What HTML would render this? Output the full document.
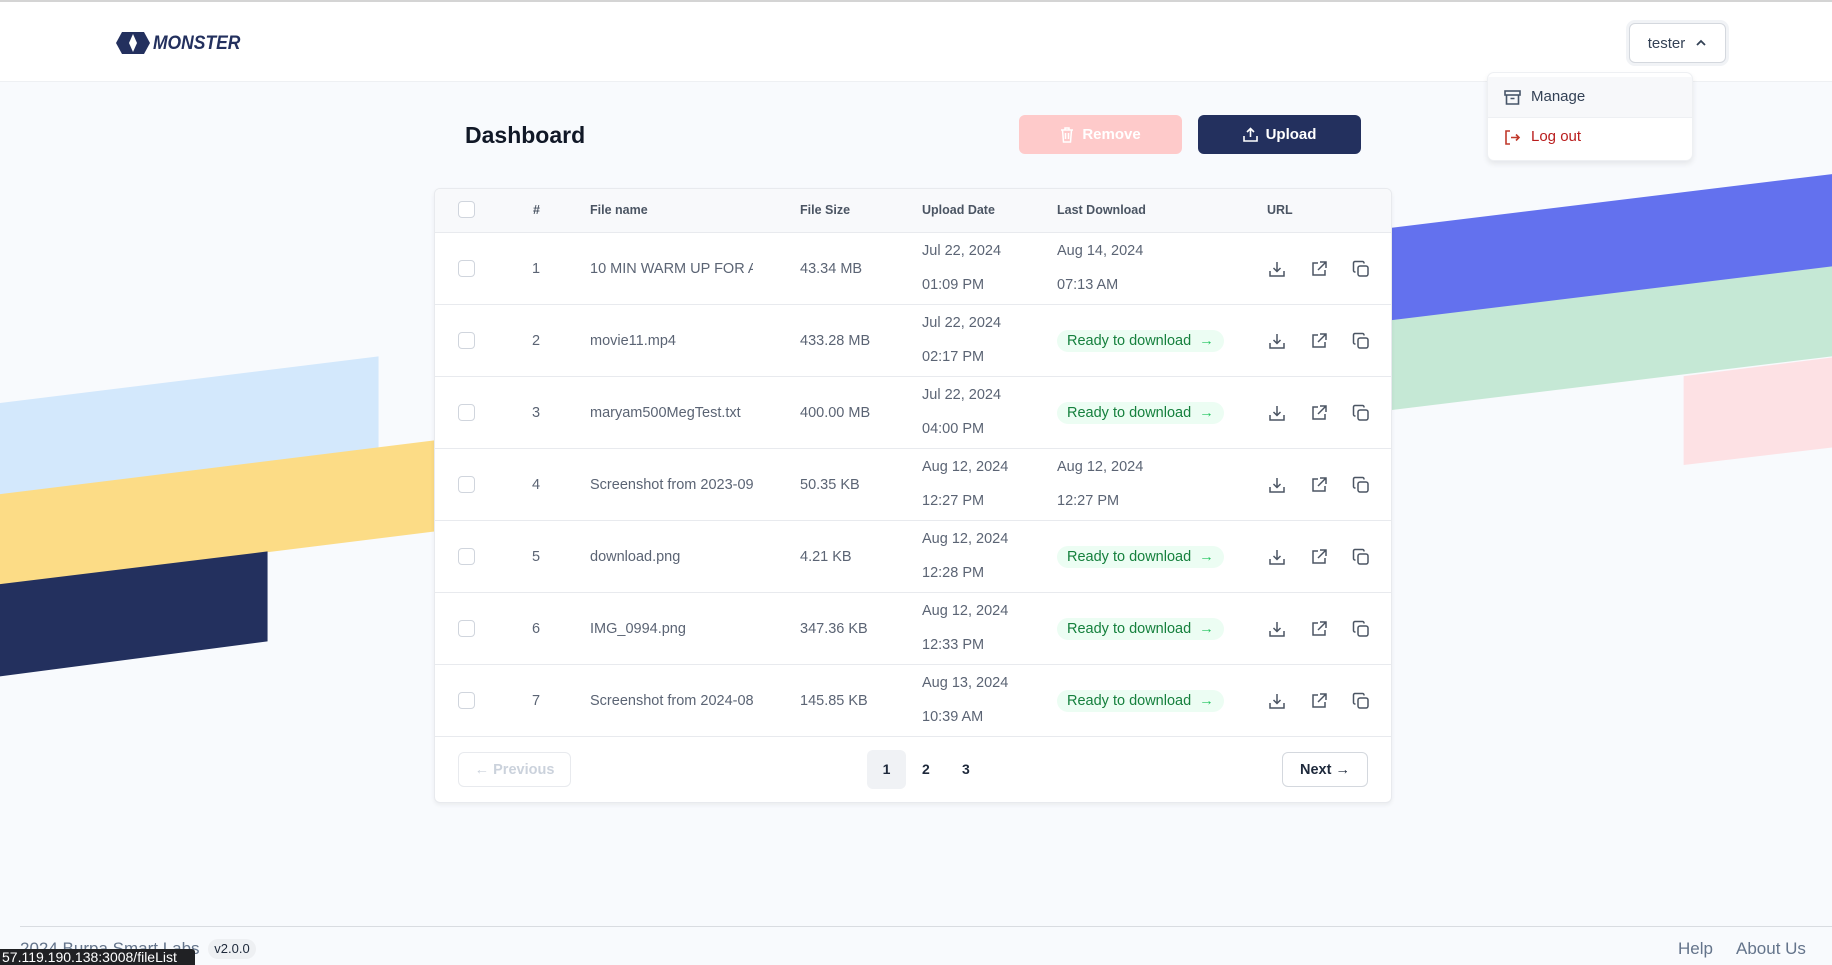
<!DOCTYPE html>
<html><head><meta charset="utf-8"><style>
*{box-sizing:border-box;margin:0;padding:0}
body{width:1832px;height:965px;overflow:hidden;background:#f8fafd;font-family:"Liberation Sans",sans-serif;position:relative;color:#64748b}
.abs{position:absolute}
#hdr{left:0;top:0;width:1832px;height:82px;background:#fff;border-top:2px solid #d4d4d4;border-bottom:1px solid #eef0f3}
.btn{position:absolute;border-radius:6px;display:flex;align-items:center;justify-content:center;gap:8px;font-weight:bold;font-size:15px}
#card{left:434px;top:188px;width:958px;height:615px;background:#fff;border:1px solid #e8eaee;border-radius:6px;box-shadow:0 2px 4px rgba(0,0,0,.06);overflow:hidden}
.th{position:absolute;top:0;height:43px;line-height:43px;font-size:12.5px;font-weight:bold;color:#4b5563}
.row{position:absolute;left:0;width:958px;height:72px;border-top:1px solid #e8eaee}
.c{position:absolute;top:0;height:72px;line-height:72px;font-size:14.5px;color:#5b6474;white-space:nowrap;overflow:hidden}
.d{position:absolute;font-size:14.5px;color:#5b6474;white-space:nowrap}
.cb{position:absolute;left:23px;width:17px;height:17px;border:1px solid #d0d5dd;border-radius:4px;background:#fff}
.rdy{position:absolute;left:622px;top:25px;height:22px;padding:0 10px;border-radius:11px;background:#ecfdf3;color:#15803d;font-size:14.5px;line-height:22px;white-space:nowrap}
.ic{position:absolute;top:27px;width:18px;height:18px}
</style></head><body>
<svg class="abs" style="left:0;top:0" width="1832" height="965" viewBox="0 0 1568 826" preserveAspectRatio="none">
<polygon points="0,345 324,305 324,420 0,460" fill="#d3e8fc"/>
<polygon points="0,423 420,371 420,449 0,501" fill="#fcdc86"/>
<polygon points="0,500 229,472 229,549 0,579" fill="#23305e"/>
<polygon points="1441,322 1568,306 1568,383 1441,398" fill="#fde1e4"/>
<polygon points="1150,278 1568,227 1568,305 1150,356" fill="#c5e8d5"/>
<polygon points="1150,200 1568,149 1568,228 1150,279" fill="#6371ee"/>
</svg>
<div id="hdr" class="abs"></div>
<svg class="abs" style="left:116px;top:32px" width="34" height="22" viewBox="0 0 34 22"><polygon points="6,0 28,0 34,11 28,22 6,22 0,11" fill="#23305e"/><polygon points="17,2 21,11 17,20 13,11" fill="#fff"/></svg>
<div class="abs" style="left:153px;top:33px;font-size:19px;font-weight:bold;font-style:italic;color:#23305e;transform:scaleX(0.92);transform-origin:left">MONSTER</div>
<div class="abs" style="left:1629px;top:23px;width:97px;height:40px;border:1px solid #d4d8de;border-radius:6px;background:#fff;box-shadow:0 0 0 3px #f1f3f6;font-size:15px;color:#334155;display:flex;align-items:center;justify-content:center;gap:10px">tester <svg width="12" height="8" viewBox="0 0 12 8"><path d="M2 6 L6 2 L10 6" stroke="#334155" stroke-width="1.8" fill="none"/></svg></div>
<div class="abs" style="left:1487px;top:72px;width:206px;height:89px;background:#fff;border:1px solid #eef0f3;border-radius:7px;box-shadow:0 3px 6px rgba(0,0,0,.08);overflow:hidden">
<div style="position:absolute;left:0;top:4px;width:206px;height:41px;background:#f7f8fa;border-bottom:1px solid #eef0f3"></div>
<svg class="abs" style="left:16px;top:17px" width="17" height="15" viewBox="0 0 17 15"><rect x="1" y="1" width="15" height="4" fill="none" stroke="#475569" stroke-width="1.6"/><path d="M2.5 5 V14 H14.5 V5 M6.5 8.5 H10.5" fill="none" stroke="#475569" stroke-width="1.6"/></svg>
<div class="abs" style="left:43px;top:15px;font-size:15px;color:#334155">Manage</div>
<svg class="abs" style="left:16px;top:57px" width="17" height="15" viewBox="0 0 17 15"><path d="M6 1 H2 V14 H6 M7 7.5 H15 M12 4.5 L15 7.5 L12 10.5" fill="none" stroke="#c0392b" stroke-width="1.6"/></svg>
<div class="abs" style="left:43px;top:55px;font-size:15px;color:#b91c1c">Log out</div>
</div>
<div class="abs" style="left:465px;top:122px;font-size:23px;font-weight:bold;color:#111827">Dashboard</div>
<div class="btn" style="left:1019px;top:115px;width:163px;height:39px;background:#fecaca;color:#fff"><svg width="14" height="16" viewBox="0 0 14 16"><path d="M1 3 H13 M5 3 V1 H9 V3 M2.5 3 L3.5 15 H10.5 L11.5 3 M5.5 6 V12 M8.5 6 V12" stroke="#fff" stroke-width="1.5" fill="none"/></svg>Remove</div>
<div class="btn" style="left:1198px;top:115px;width:163px;height:39px;background:#23305e;color:#fff"><svg width="15" height="15" viewBox="0 0 15 15"><path d="M1 9 V14 H14 V9 M7.5 10 V1.5 M4 5 L7.5 1.5 L11 5" stroke="#fff" stroke-width="1.6" fill="none"/></svg>Upload</div>

<div id="card" class="abs">
<div style="position:absolute;left:0;top:0;width:958px;height:43px;background:#f8f9fb"></div>
<div style="position:absolute;left:0;top:547px;width:958px;height:1px;background:#e8eaee"></div>
<div class="cb" style="top:12px"></div>
<div class="th" style="left:98px">#</div>
<div class="th" style="left:155px">File name</div>
<div class="th" style="left:365px">File Size</div>
<div class="th" style="left:487px">Upload Date</div>
<div class="th" style="left:622px">Last Download</div>
<div class="th" style="left:832px">URL</div>
</div>
<script>
var data=[
["1","10 MIN WARM UP FOR ATHLETES","43.34 MB","Jul 22, 2024","01:09 PM","Aug 14, 2024","07:13 AM"],
["2","movie11.mp4","433.28 MB","Jul 22, 2024","02:17 PM"],
["3","maryam500MegTest.txt","400.00 MB","Jul 22, 2024","04:00 PM"],
["4","Screenshot from 2023-09-01","50.35 KB","Aug 12, 2024","12:27 PM","Aug 12, 2024","12:27 PM"],
["5","download.png","4.21 KB","Aug 12, 2024","12:28 PM"],
["6","IMG_0994.png","347.36 KB","Aug 12, 2024","12:33 PM"],
["7","Screenshot from 2024-08-13","145.85 KB","Aug 13, 2024","10:39 AM"]];
var ico='<svg class="ic" style="left:LEFTpx" viewBox="0 0 18 18">PATH</svg>';
var p1='<path d="M2 11 V16 H16 V11 M9 2 V11.5 M5.5 8 L9 11.5 L12.5 8" stroke="#4b5563" stroke-width="1.5" fill="none"/>';
var p2='<path d="M8 3 H3 V15 H15 V10 M10 2 H16 V8 M16 2 L8 10" stroke="#4b5563" stroke-width="1.5" fill="none"/>';
var p3='<rect x="6" y="6" width="10" height="10" rx="2" stroke="#4b5563" stroke-width="1.5" fill="none"/><path d="M12 3.5 V3 A1.5 1.5 0 0 0 10.5 1.5 H3 A1.5 1.5 0 0 0 1.5 3 V10.5 A1.5 1.5 0 0 0 3 12 H3.5" stroke="#4b5563" stroke-width="1.5" fill="none"/>';
var h='';
data.forEach(function(r,i){
 var s='<div class="row" style="top:'+(43+i*72)+'px">';
 s+='<div class="cb" style="top:27px"></div>';
 s+='<div class="c" style="left:97px">'+r[0]+'</div>';
 s+='<div class="c" style="left:155px;width:163px">'+r[1]+'</div>';
 s+='<div class="c" style="left:365px">'+r[2]+'</div>';
 s+='<div class="d" style="left:487px;top:10px">'+r[3]+'</div><div class="d" style="left:487px;top:44px">'+r[4]+'</div>';
 if(r[5]) s+='<div class="d" style="left:622px;top:10px">'+r[5]+'</div><div class="d" style="left:622px;top:44px">'+r[6]+'</div>';
 else s+='<div class="rdy">Ready to download &nbsp;<span style="color:#22c55e">→</span></div>';
 s+=ico.replace('LEFT',833).replace('PATH',p1)+ico.replace('LEFT',875).replace('PATH',p2)+ico.replace('LEFT',917).replace('PATH',p3);
 s+='</div>';h+=s;});
document.getElementById('card').insertAdjacentHTML('beforeend',h);
</script>
<div class="abs" style="left:458px;top:752px;width:113px;height:35px;border:1px solid #e8eaee;border-radius:6px;color:#cbd2dc;font-size:14.5px;font-weight:bold;display:flex;align-items:center;justify-content:center;gap:8px">← Previous</div>
<div class="abs" style="left:867px;top:750px;width:39px;height:39px;border-radius:6px;background:#f0f2f5;color:#1e293b;font-size:14px;font-weight:bold;text-align:center;line-height:39px">1</div>
<div class="abs" style="left:922px;top:750px;width:14px;line-height:39px;color:#1e293b;font-size:14px;font-weight:bold">2</div>
<div class="abs" style="left:962px;top:750px;width:14px;line-height:39px;color:#1e293b;font-size:14px;font-weight:bold">3</div>
<div class="abs" style="left:1282px;top:752px;width:86px;height:35px;border:1px solid #d4d8de;border-radius:6px;background:#fff;color:#1e293b;font-size:14.5px;font-weight:bold;display:flex;align-items:center;justify-content:center;gap:8px">Next →</div>
<div class="abs" style="left:20px;top:926px;width:1812px;height:1px;background:#d9dce1"></div>
<div class="abs" style="left:20px;top:939px;font-size:17px;color:#64748b">2024 Burpa Smart Labs</div>
<div class="abs" style="left:208px;top:939px;width:48px;height:20px;border-radius:10px;background:#eef0f3;color:#1e293b;font-size:13px;text-align:center;line-height:20px">v2.0.0</div>
<div class="abs" style="left:1678px;top:939px;font-size:17px;color:#64748b">Help</div>
<div class="abs" style="left:1736px;top:939px;font-size:17px;color:#64748b">About Us</div>
<div class="abs" style="left:0;top:949px;width:195px;height:16px;background:#202124;color:#fff;font-size:14px;line-height:16px;padding-left:2px;border-top-right-radius:3px;white-space:nowrap">57.119.190.138:3008/fileList</div>
</body></html>
